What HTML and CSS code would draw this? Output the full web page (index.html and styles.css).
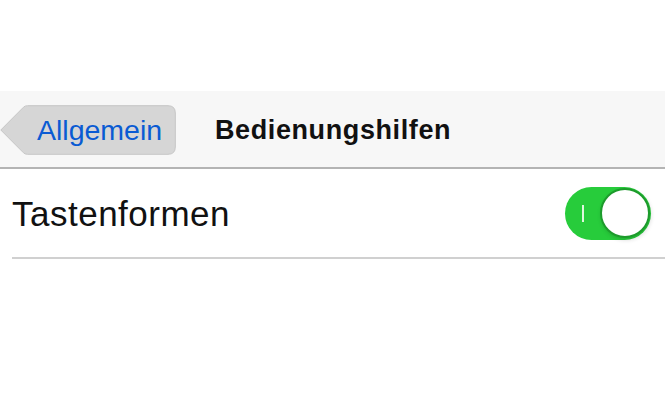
FILE: index.html
```html
<!DOCTYPE html>
<html lang="de">
<head>
    <meta charset="UTF-8" />
    <title>Bedienungshilfen</title>
    <link rel="stylesheet" href="styles.css">
</head>
<body>
    <div class="screen">
        <div class="navbar">
            <a class="btn-back" href="#">
                <svg class="btn-back-shape" viewBox="0 0 176 50" width="176" height="50">
                    <path d="M0.8 25 L23.5 2.2 Q25 0.7 27.5 0.7 H168 Q175.3 0.7 175.3 8 V42 Q175.3 49.3 168 49.3 H27.5 Q25 49.3 23.5 47.8 Z" fill="#d6d6d6" stroke="#c6c6c6" stroke-width="1" />
                </svg>
                <span class="btn-back-label">Allgemein</span>
            </a>
            <h1 class="nav-title">Bedienungshilfen</h1>
        </div>

        <div class="row">
            <span class="row-label">Tastenformen</span>
            <div class="switch">
                <span class="switch-mark"></span>
                <span class="switch-knob"></span>
            </div>
        </div>
    </div>
</body>
</html>
```

FILE: styles.css
```css
body,
html {
    margin: 0;
    padding: 0;
    background-color: #ffffff;
    font-family: "Liberation Sans", Arial, sans-serif;
    color: #111;
}

.screen {
    padding-top: 91px;
}

.navbar {
    display: flex;
    align-items: center;
    height: 76px;
    background-color: #f7f7f7;
    border-bottom: 2px solid #b4b4b4;
}

.btn-back {
    position: relative;
    display: flex;
    align-items: center;
    width: 176px;
    height: 50px;
    margin-top: 2px;
    text-decoration: none;
}

.btn-back-shape {
    position: absolute;
    left: 0;
    top: 0;
}

.btn-back-label {
    position: relative;
    padding-left: 37px;
    font-size: 28.5px;
    color: #0a5bd3;
    line-height: 50px;
}

.nav-title {
    margin: 0 0 0 39px;
    font-size: 27px;
    font-weight: 700;
    letter-spacing: 0.6px;
    color: #111;
    padding-top: 2px;
}

.row {
    display: flex;
    align-items: center;
    justify-content: space-between;
    height: 88px;
    margin-left: 12px;
    padding-right: 14px;
    border-bottom: 2px solid #d0d0d0;
}

.row-label {
    font-size: 35px;
    letter-spacing: 0.5px;
    padding-top: 2px;
}

.switch {
    position: relative;
    display: flex;
    align-items: center;
    justify-content: flex-end;
    width: 86px;
    height: 53px;
    border-radius: 27px;
    background-color: #27cc3b;
    box-sizing: border-box;
    padding-right: 1px;
}

.switch-mark {
    position: absolute;
    left: 17px;
    top: 18px;
    width: 2px;
    height: 17px;
    background-color: #dff7dd;
}

.switch-knob {
    width: 50px;
    height: 50px;
    border-radius: 50%;
    background-color: #fff;
    border: 2px solid #1d9b2c;
    box-sizing: border-box;
    box-shadow: 1px 2px 4px rgba(0, 0, 0, 0.15);
}
```
